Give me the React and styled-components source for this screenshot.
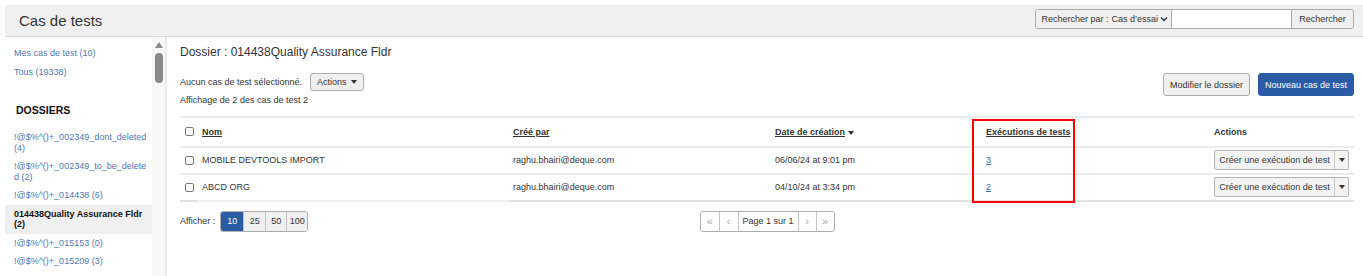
import React from 'react';
import styled, { createGlobalStyle } from 'styled-components';

const Global = createGlobalStyle`
  html, body { margin: 0; padding: 0; background: #fff; }
  body { font-family: "Liberation Sans", Arial, sans-serif; font-size: 9px; color: #333; }
  * { box-sizing: border-box; }
`;

const Page = styled.div`
  width: 1363px;
  height: 276px;
  padding: 5px 0 0 5px;
  display: flex;
  flex-direction: column;
  overflow: hidden;
`;

const Header = styled.header`
  flex: none;
  height: 32px;
  background: #f0f0f0;
  border-bottom: 1px solid #d9d9d9;
  display: flex;
  align-items: center;
  justify-content: space-between;
  padding: 0 9px 0 14px;
`;

const Title = styled.h1`
  margin: 0;
  font-size: 15px;
  font-weight: normal;
  line-height: 1;
  color: #333;
`;

const SearchGroup = styled.div`
  align-self: flex-start;
  margin-top: 4px;
  height: 20px;
  display: flex;
  border: 1px solid #a9a9a9;
  border-radius: 3px;
  overflow: hidden;
`;

const SearchBy = styled.div`
  display: flex;
  align-items: center;
  gap: 3px;
  padding: 0 3px 0 5px;
  background: #f0f0f0;
`;

const SelectLike = styled.span`
  display: flex;
  align-items: center;
  gap: 2px;
`;

const SearchInput = styled.div`
  width: 120px;
  background: #fff;
  border-left: 1px solid #a9a9a9;
`;

const SearchButton = styled.button`
  width: 62px;
  border: 0;
  border-left: 1px solid #a9a9a9;
  background: #f0f0f0;
  font: inherit;
  color: #333;
  padding: 0;
`;

const Body = styled.div`
  flex: 1;
  display: flex;
  min-height: 0;
`;

const Sidebar = styled.aside`
  flex: none;
  display: flex;
  border-right: 2px solid #ececec;
`;

const SideList = styled.nav`
  width: 147px;
  padding-top: 7px;
  display: flex;
  flex-direction: column;
`;

const SideLink = styled.a`
  display: block;
  padding: 4px 5px 4px 9px;
  line-height: 10.5px;
  word-break: break-all;
  text-decoration: none;
  color: ${p => (p.$active ? '#111' : '#4f77b3')};
  font-weight: ${p => (p.$active ? 'bold' : 'normal')};
  background: ${p => (p.$active ? '#efefef' : 'transparent')};
`;

const SideHeading = styled.h2`
  margin: 23px 0 11px 11px;
  font-size: 10.5px;
  line-height: 13px;
  font-weight: bold;
  color: #111;
`;

const ScrollTrack = styled.div`
  width: 13px;
  background: #f8f8f8;
  display: flex;
  flex-direction: column;
  align-items: center;
  padding-top: 5px;
`;

const ScrollArrow = styled.span`
  width: 0;
  height: 0;
  border-left: 4.5px solid transparent;
  border-right: 4.5px solid transparent;
  border-bottom: 6px solid #8a8a8a;
`;

const ScrollThumb = styled.span`
  margin-top: 5px;
  width: 8px;
  height: 30px;
  border-radius: 4px;
  background: #8a8a8a;
`;

const Main = styled.main`
  flex: 1;
  padding: 8px 9px 0 13px;
  display: flex;
  flex-direction: column;
  min-width: 0;
`;

const FolderTitle = styled.h2`
  margin: 0;
  font-size: 12px;
  line-height: 14px;
  font-weight: normal;
  color: #333;
`;

const Toolbar = styled.div`
  margin-top: 14px;
  display: flex;
  justify-content: space-between;
  align-items: flex-start;
`;

const SelectionRow = styled.div`
  display: flex;
  align-items: center;
  gap: 8px;
  height: 18px;
`;

const CountLine = styled.div`
  margin-top: 3.5px;
  line-height: 11px;
`;

const Btn = styled.button`
  font: inherit;
  height: ${p => p.$h || 23}px;
  padding: 0 ${p => p.$px ?? 6}px;
  border-radius: 3px;
  border: 1px solid ${p => (p.$primary ? '#2a5ca6' : '#adadad')};
  background: ${p => (p.$primary ? '#2a5ca6' : '#f0f0f0')};
  color: ${p => (p.$primary ? '#fff' : '#333')};
  display: inline-flex;
  align-items: center;
  gap: 4px;
`;

const ButtonRow = styled.div`
  display: flex;
  gap: 8px;
`;

const Caret = styled.span`
  display: inline-block;
  width: 0;
  height: 0;
  border-left: 3px solid transparent;
  border-right: 3px solid transparent;
  border-top: 4px solid ${p => p.$color || '#333'};
`;

const TableWrap = styled.div`
  position: relative;
  margin-top: 10px;
`;

const Table = styled.table`
  width: 100%;
  border-collapse: collapse;
  table-layout: fixed;
  border-top: 2px solid #ebebeb;
`;

const Th = styled.th`
  height: 30px;
  padding: 0 4px 0 ${p => p.$pl ?? 4}px;
  text-align: left;
  font-weight: bold;
  color: #333;
  border-bottom: 2px solid #ebebeb;
  vertical-align: middle;
`;

const Td = styled.td`
  height: 27px;
  padding: 0 4px 0 ${p => p.$pl ?? 4}px;
  vertical-align: middle;
  color: #333;
  border-bottom: 2px solid ${p => p.$line || '#ebebeb'};
`;

const SortLink = styled.a`
  color: #333;
  text-decoration: underline;
  display: inline-flex;
  align-items: center;
  gap: 4px;
`;

const CountLink = styled.a`
  color: #3b6cb7;
  text-decoration: underline;
`;

const Check = styled.span`
  display: block;
  width: 9px;
  height: 9px;
  border: 1px solid #767676;
  border-radius: 2px;
  background: #fff;
`;

const SplitButton = styled.div`
  display: flex;
  height: 20px;
  width: 135px;
  border: 1px solid #b3b3b3;
  border-radius: 2px;
  background: #f3f3f3;
  overflow: hidden;
`;

const SplitMain = styled.span`
  flex: 1;
  display: flex;
  align-items: center;
  justify-content: center;
  color: #333;
`;

const SplitToggle = styled.span`
  width: 14px;
  border-left: 1px solid #c9c9c9;
  display: flex;
  align-items: center;
  justify-content: center;
`;

const Highlight = styled.div`
  position: absolute;
  left: 792px;
  top: 3px;
  width: 103px;
  height: 84px;
  border: 2px solid #f00;
  pointer-events: none;
`;

const Footer = styled.div`
  margin-top: 9px;
  display: grid;
  grid-template-columns: 1fr auto 1fr;
  align-items: center;
`;

const PageSize = styled.div`
  display: flex;
  align-items: center;
  gap: 5px;
`;

const Segmented = styled.div`
  display: flex;
  height: 21px;
  border: 1px solid #adadad;
  border-radius: 3px;
  overflow: hidden;
`;

const Seg = styled.span`
  width: ${p => p.$w}px;
  display: flex;
  align-items: center;
  justify-content: center;
  background: ${p => (p.$active ? '#2a5ca6' : p.$white ? '#fff' : '#f0f0f0')};
  color: ${p => (p.$active ? '#fff' : p.$muted ? '#a6a6a6' : '#333')};
  font-size: ${p => (p.$big ? 11 : 9)}px;
  & + & { border-left: 1px solid #c4c4c4; }
`;

const Checkbox = () => <Check role="checkbox" aria-checked="false" />;

const Chevron = () => (
  <svg width="8" height="6" viewBox="0 0 8 6">
    <polyline points="1,1.5 4,4.5 7,1.5" fill="none" stroke="#333" strokeWidth="1.5" />
  </svg>
);

const folders = [
  '!@$%^()+_002349_dont_deleted (4)',
  '!@$%^()+_002349_to_be_deleted (2)',
  '!@$%^()+_014438 (6)',
  '014438Quality Assurance Fldr (2)',
  '!@$%^()+_015153 (0)',
  '!@$%^()+_015209 (3)',
];

const rows = [
  { name: 'MOBILE DEVTOOLS IMPORT', by: 'raghu.bhairi@deque.com', date: '06/06/24 at 9:01 pm', runs: '3' },
  { name: 'ABCD ORG', by: 'raghu.bhairi@deque.com', date: '04/10/24 at 3:34 pm', runs: '2' },
];

export default function App() {
  return (
    <>
      <Global />
      <Page>
        <Header>
          <Title>Cas de tests</Title>
          <SearchGroup>
            <SearchBy>
              <span>Rechercher par :</span>
              <SelectLike>Cas d’essai <Chevron /></SelectLike>
            </SearchBy>
            <SearchInput />
            <SearchButton>Rechercher</SearchButton>
          </SearchGroup>
        </Header>
        <Body>
          <Sidebar>
            <SideList>
              <SideLink>Mes cas de test (10)</SideLink>
              <SideLink>Tous (19338)</SideLink>
              <SideHeading>DOSSIERS</SideHeading>
              {folders.map((f, i) => (
                <SideLink key={f} $active={i === 3}>{f}</SideLink>
              ))}
            </SideList>
            <ScrollTrack>
              <ScrollArrow />
              <ScrollThumb />
            </ScrollTrack>
          </Sidebar>
          <Main>
            <FolderTitle>Dossier : 014438Quality Assurance Fldr</FolderTitle>
            <Toolbar>
              <div>
                <SelectionRow>
                  <span>Aucun cas de test sélectionné.</span>
                  <Btn $h={18} $px={6}>Actions <Caret /></Btn>
                </SelectionRow>
                <CountLine>Affichage de 2 des cas de test 2</CountLine>
              </div>
              <ButtonRow>
                <Btn>Modifier le dossier</Btn>
                <Btn $primary>Nouveau cas de test</Btn>
              </ButtonRow>
            </Toolbar>
            <TableWrap>
              <Table>
                <colgroup>
                  <col style={{ width: 18 }} />
                  <col style={{ width: 311 }} />
                  <col style={{ width: 262 }} />
                  <col style={{ width: 211 }} />
                  <col style={{ width: 228 }} />
                  <col />
                </colgroup>
                <thead>
                  <tr>
                    <Th $pl={5}><Checkbox /></Th>
                    <Th><SortLink>Nom</SortLink></Th>
                    <Th><SortLink>Créé par</SortLink></Th>
                    <Th><SortLink>Date de création</SortLink> <Caret /></Th>
                    <Th><SortLink>Exécutions de tests</SortLink></Th>
                    <Th>Actions</Th>
                  </tr>
                </thead>
                <tbody>
                  {rows.map((r, i) => {
                    const last = i === rows.length - 1;
                    return (
                      <tr key={r.name}>
                        <Td $pl={5} $line={last ? '#e2e2e2' : undefined}><Checkbox /></Td>
                        <Td $line={last ? '#f0f0f0' : undefined}>{r.name}</Td>
                        <Td $line={last ? '#e2e2e2' : undefined}>{r.by}</Td>
                        <Td $line={last ? '#e2e2e2' : undefined}>{r.date}</Td>
                        <Td $line={last ? '#e2e2e2' : undefined}><CountLink>{r.runs}</CountLink></Td>
                        <Td $line={last ? '#e2e2e2' : undefined}>
                          <SplitButton>
                            <SplitMain>Créer une exécution de test</SplitMain>
                            <SplitToggle><Caret /></SplitToggle>
                          </SplitButton>
                        </Td>
                      </tr>
                    );
                  })}
                </tbody>
              </Table>
              <Highlight />
            </TableWrap>
            <Footer>
              <PageSize>
                <span>Afficher :</span>
                <Segmented>
                  <Seg $w={22} $active>10</Seg>
                  <Seg $w={22}>25</Seg>
                  <Seg $w={21}>50</Seg>
                  <Seg $w={21}>100</Seg>
                </Segmented>
              </PageSize>
              <Segmented>
                <Seg $w={18} $white $muted $big>«</Seg>
                <Seg $w={19} $white $muted $big>‹</Seg>
                <Seg $w={60} $white>Page 1 sur 1</Seg>
                <Seg $w={18} $white $muted $big>›</Seg>
                <Seg $w={18} $white $muted $big>»</Seg>
              </Segmented>
              <span />
            </Footer>
          </Main>
        </Body>
      </Page>
    </>
  );
}
